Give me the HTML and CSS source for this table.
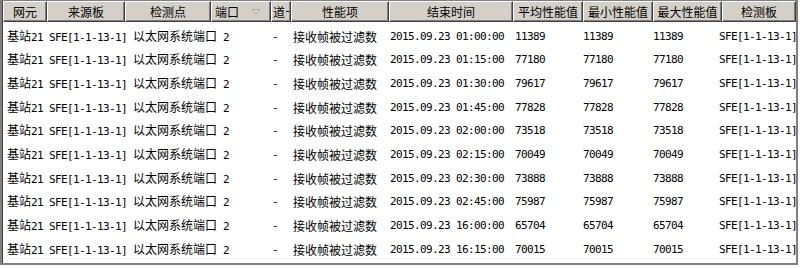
FILE: index.html
```html
<!DOCTYPE html>
<html>
<head>
<meta charset="utf-8">
<link rel="stylesheet" href="styles.css">
</head>
<body>
<div class="frame">
  <div class="head">
    <div class="hc">网元</div>
    <div class="hc">来源板</div>
    <div class="hc">检测点</div>
    <div class="hc hc-sort">端口<svg class="tri" width="8" height="6" viewBox="0 0 8 6"><path d="M0.5 0.5 H7.5 L4 5.5 Z" fill="#e4e2dc" stroke="#a8a69f" stroke-width="1"/></svg></div>
    <div class="hc hc-left">道</div>
    <div class="hc">性能项</div>
    <div class="hc">结束时间</div>
    <div class="hc">平均性能值</div>
    <div class="hc">最小性能值</div>
    <div class="hc">最大性能值</div>
    <div class="hc">检测板</div>
  </div>
  <div class="rows">
    <div class="row"><div class="m"><span class="cn">基站</span>21 SFE[1-1-13-1] <span class="cn">以太网系统端口</span> 2</div><div class="m">-</div><div class="cn">接收帧被过滤数</div><div class="m">2015.09.23 01:00:00</div><div class="m">11389</div><div class="m">11389</div><div class="m">11389</div><div class="m">SFE[1-1-13-1]</div></div>
    <div class="row"><div class="m"><span class="cn">基站</span>21 SFE[1-1-13-1] <span class="cn">以太网系统端口</span> 2</div><div class="m">-</div><div class="cn">接收帧被过滤数</div><div class="m">2015.09.23 01:15:00</div><div class="m">77180</div><div class="m">77180</div><div class="m">77180</div><div class="m">SFE[1-1-13-1]</div></div>
    <div class="row"><div class="m"><span class="cn">基站</span>21 SFE[1-1-13-1] <span class="cn">以太网系统端口</span> 2</div><div class="m">-</div><div class="cn">接收帧被过滤数</div><div class="m">2015.09.23 01:30:00</div><div class="m">79617</div><div class="m">79617</div><div class="m">79617</div><div class="m">SFE[1-1-13-1]</div></div>
    <div class="row"><div class="m"><span class="cn">基站</span>21 SFE[1-1-13-1] <span class="cn">以太网系统端口</span> 2</div><div class="m">-</div><div class="cn">接收帧被过滤数</div><div class="m">2015.09.23 01:45:00</div><div class="m">77828</div><div class="m">77828</div><div class="m">77828</div><div class="m">SFE[1-1-13-1]</div></div>
    <div class="row"><div class="m"><span class="cn">基站</span>21 SFE[1-1-13-1] <span class="cn">以太网系统端口</span> 2</div><div class="m">-</div><div class="cn">接收帧被过滤数</div><div class="m">2015.09.23 02:00:00</div><div class="m">73518</div><div class="m">73518</div><div class="m">73518</div><div class="m">SFE[1-1-13-1]</div></div>
    <div class="row"><div class="m"><span class="cn">基站</span>21 SFE[1-1-13-1] <span class="cn">以太网系统端口</span> 2</div><div class="m">-</div><div class="cn">接收帧被过滤数</div><div class="m">2015.09.23 02:15:00</div><div class="m">70049</div><div class="m">70049</div><div class="m">70049</div><div class="m">SFE[1-1-13-1]</div></div>
    <div class="row"><div class="m"><span class="cn">基站</span>21 SFE[1-1-13-1] <span class="cn">以太网系统端口</span> 2</div><div class="m">-</div><div class="cn">接收帧被过滤数</div><div class="m">2015.09.23 02:30:00</div><div class="m">73888</div><div class="m">73888</div><div class="m">73888</div><div class="m">SFE[1-1-13-1]</div></div>
    <div class="row"><div class="m"><span class="cn">基站</span>21 SFE[1-1-13-1] <span class="cn">以太网系统端口</span> 2</div><div class="m">-</div><div class="cn">接收帧被过滤数</div><div class="m">2015.09.23 02:45:00</div><div class="m">75987</div><div class="m">75987</div><div class="m">75987</div><div class="m">SFE[1-1-13-1]</div></div>
    <div class="row"><div class="m"><span class="cn">基站</span>21 SFE[1-1-13-1] <span class="cn">以太网系统端口</span> 2</div><div class="m">-</div><div class="cn">接收帧被过滤数</div><div class="m">2015.09.23 16:00:00</div><div class="m">65704</div><div class="m">65704</div><div class="m">65704</div><div class="m">SFE[1-1-13-1]</div></div>
    <div class="row"><div class="m"><span class="cn">基站</span>21 SFE[1-1-13-1] <span class="cn">以太网系统端口</span> 2</div><div class="m">-</div><div class="cn">接收帧被过滤数</div><div class="m">2015.09.23 16:15:00</div><div class="m">70015</div><div class="m">70015</div><div class="m">70015</div><div class="m">SFE[1-1-13-1]</div></div>
  </div>
</div>
</body>
</html>
```
FILE: styles.css
```css
* { box-sizing: border-box; }
body { margin: 0; background: #fff; }
.frame {
  width: 798px;
  height: 265px;
  border-style: solid;
  border-width: 1px 2px 2px 2px;
  border-color: #808080;
  box-shadow: inset 1px 0 0 #404040;
  background: #fff;
  overflow: hidden;
  font-family: "Noto Sans CJK SC", sans-serif;
  font-size: 12px;
  color: #000;
}
.head {
  display: grid;
  grid-template-columns: 44px 78px 86px 60px 20px 98px 124px 70px 70px 69px 74px;
  padding-left: 1px;
  height: 21px;
}
.hc {
  background: #d4d0c8;
  border-top: 1px solid #fff;
  border-left: 1px solid #fff;
  border-right: 1px solid #404040;
  border-bottom: 1px solid #404040;
  box-shadow: inset -1px -1px 0 #808080;
  display: flex;
  align-items: center;
  justify-content: center;
  overflow: hidden;
  white-space: nowrap;
  line-height: 1;
}
.hc-sort { justify-content: flex-start; padding-left: 3px; }
.tri { margin-left: 13px; margin-top: 1px; }
.hc-left { justify-content: flex-start; padding-left: 1px; }
.hc-left::after {
  content: "";
  width: 3px;
  height: 1px;
  margin-left: 1px;
  background: #000;
}
.rows { padding-top: 3px; }
.row {
  display: grid;
  grid-template-columns: 265px 21px 97px 125px 68px 70px 66px 1fr;
  padding-left: 5px;
  height: 23.67px;
  align-items: center;
  white-space: nowrap;
  line-height: 14px;
}
.m {
  font-family: "DejaVu Sans Mono", monospace;
  font-size: 11px;
  letter-spacing: -0.62px;
}
.cn {
  font-family: "Noto Sans CJK SC", sans-serif;
  font-size: 12px;
  letter-spacing: 0;
}
```
